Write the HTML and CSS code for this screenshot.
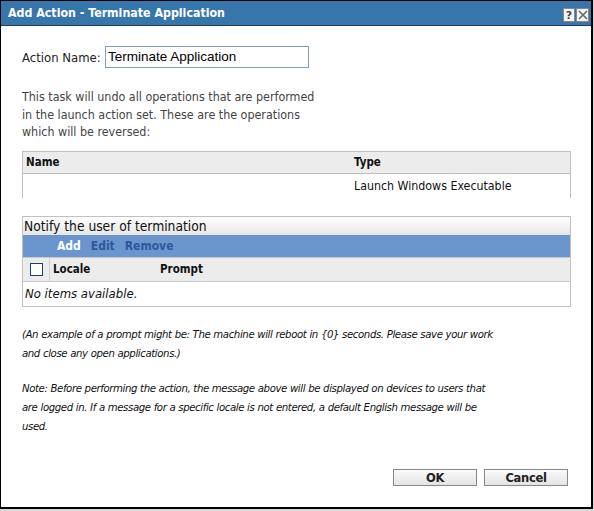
FILE: index.html
```html
<!DOCTYPE html>
<html>
<head>
<meta charset="utf-8">
<link rel="stylesheet" href="styles.css">
</head>
<body>
<div class="dialog">
  <div class="titlebar">
    <span class="title">Add Action - Terminate Application</span>
    <div class="tbtns">
      <span class="tbtn help">?</span>
      <span class="tbtn close"><svg width="10" height="10" viewBox="0 0 10 10"><path d="M1 1L9 9M9 1L1 9" stroke="#666" stroke-width="1.6"/></svg></span>
    </div>
  </div>
  <div class="content">
    <div class="namerow">
      <label class="lbl">Action Name:</label>
      <div class="input">Terminate Application</div>
    </div>
    <p class="intro">This task will undo all operations that are performed<br>in the launch action set. These are the operations<br>which will be reversed:</p>
    <div class="table1">
      <div class="t1head"><span class="c1">Name</span><span class="c2">Type</span></div>
      <div class="t1row"><span class="c1"></span><span class="c2">Launch Windows Executable</span></div>
    </div>
    <div class="notify">
      <div class="ntitle">Notify the user of termination</div>
      <div class="toolbar"><span class="add">Add</span><span class="act">Edit</span><span class="act">Remove</span></div>
      <div class="nhead"><span class="chkcell"><span class="chk"></span></span><span class="loc">Locale</span><span class="prm">Prompt</span></div>
      <div class="nrow">No items available.</div>
    </div>
    <p class="ital ex">(An example of a prompt might be: The machine will reboot in {0} seconds. Please save your work<br>and close any open applications.)</p>
    <p class="ital note">Note: Before performing the action, the message above will be displayed on devices to users that<br>are logged in. If a message for a specific locale is not entered, a default English message will be<br>used.</p>
    <div class="buttons">
      <span class="btn">OK</span>
      <span class="btn">Cancel</span>
    </div>
  </div>
</div>
</body>
</html>
```
FILE: styles.css
```css
html, body { margin: 0; padding: 0; }
body { background: #d8d8d8; width: 594px; height: 511px; overflow: hidden; font-family: "DejaVu Sans Condensed", "DejaVu Sans", sans-serif; }
.dialog { width: 590px; height: 506px; border: 1px solid #000; border-right-width: 2px; border-bottom-width: 2px; background: #fff; display: flex; flex-direction: column; }
.titlebar { height: 24px; background: #3776ab; border-bottom: 1px solid #1b3a55; display: flex; align-items: center; justify-content: space-between; padding: 0 2px 0 7px; }
.title { color: #fff; font-family: "DejaVu Sans Condensed", "DejaVu Sans", sans-serif; font-size: 12.3px; font-weight: bold; }
.tbtns { display: flex; gap: 1px; margin-top: 4px; }
.tbtn { width: 10px; height: 12px; background: #f4f4f4; border: 1px solid #888; display: flex; align-items: center; justify-content: center; }
.help { font-family: "DejaVu Sans", sans-serif; font-weight: bold; font-size: 11px; color: #444; }
.close { width: 11px; }
.content { padding: 0 20px 0 21px; display: flex; flex-direction: column; flex: 1; }
.namerow { display: flex; align-items: center; margin-top: 20px; }
.lbl { font-size: 13px; color: #222; width: 83px; }
.input { width: 197px; height: 20px; border: 1px solid #7f9db9; font-family: "Liberation Sans", sans-serif; font-size: 13.5px; color: #000; padding: 0 3px 0 2px; line-height: 20px; }
.intro { margin: 20px 0 0 0; font-size: 12.4px; line-height: 17.5px; color: #444; }
.table1 { margin-top: 10px; width: 549px; font-size: 11.5px; color: #111; }
.t1head { height: 21px; background: #ececec; border: 1px solid #c0c0c0; display: flex; align-items: center; font-weight: bold; }
.t1row { height: 24px; border-left: 1px solid #c0c0c0; border-right: 1px solid #c0c0c0; display: flex; align-items: center; font-size: 12.3px; }
.c1 { width: 328px; padding-left: 3px; }
.c2 { flex: 1; }
.notify { margin-top: 18px; width: 547px; border: 1px solid #c0c0c0; }
.ntitle { height: 18px; line-height: 18px; background: linear-gradient(#ffffff, #e6e6e6); font-size: 13.7px; color: #111; padding-left: 1px; }
.toolbar { height: 22px; background: #6b96cd; display: flex; align-items: center; gap: 10px; padding-left: 34px; font-size: 12px; font-weight: bold; }
.add { color: #fff; }
.act { color: #2f579b; }
.nhead { height: 23px; background: #ececec; border-top: 1px solid #c8c8c8; border-bottom: 1px solid #c8c8c8; display: flex; align-items: center; font-size: 11.5px; font-weight: bold; color: #111; }
.chkcell { width: 26px; height: 100%; border-right: 1px solid #d0d0d0; display: flex; align-items: center; justify-content: center; }
.chk { width: 11px; height: 11px; border: 1px solid #1c3f72; background: #fff; }
.loc { width: 107px; padding-left: 3px; }
.prm { flex: 1; }
.nrow { height: 24px; line-height: 24px; font-style: italic; font-size: 13px; padding-left: 2px; color: #111; }
.ital { font-style: italic; font-size: 11.3px; letter-spacing: -0.4px; word-spacing: 0.2px; line-height: 19px; color: #111; margin: 0; }
.ex { margin-top: 18px; }
.note { margin-top: 16px; }
.buttons { display: flex; justify-content: flex-end; gap: 7px; margin-top: auto; margin-bottom: 21px; padding-right: 3px; }
.btn { width: 82px; height: 15px; border: 1px solid #888; background: linear-gradient(#fafafa, #e4e4e4); font-family: "DejaVu Sans", sans-serif; font-weight: bold; font-size: 11.5px; color: #222; display: flex; align-items: center; justify-content: center; letter-spacing: -0.3px; }
```
